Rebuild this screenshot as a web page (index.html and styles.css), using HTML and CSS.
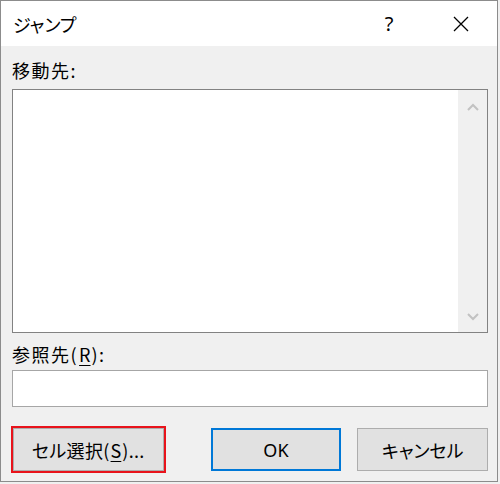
FILE: index.html
```html
<!DOCTYPE html>
<html lang="ja">
<head>
<meta charset="utf-8">
<title>ジャンプ</title>
<link rel="stylesheet" href="styles.css">
</head>
<body>
<div class="window">
  <div class="titlebar">
    <div class="title">ジャンプ</div>
    <div class="tb-btn help">?</div>
    <div class="tb-btn close">
      <svg width="16" height="16" viewBox="0 0 16 16"><path d="M1 1 L15 15 M15 1 L1 15" stroke="#000" stroke-width="1.3" fill="none"/></svg>
    </div>
  </div>
  <div class="content">
    <div class="label label-top">移動先:</div>
    <div class="listbox">
      <div class="list-area"></div>
      <div class="scrollbar">
        <svg class="arrow" width="12" height="8" viewBox="0 0 12 8"><path d="M1 7 L6 2 L11 7" stroke="#c2c2c2" stroke-width="2" fill="none"/></svg>
        <svg class="arrow" width="12" height="8" viewBox="0 0 12 8"><path d="M1 1 L6 6 L11 1" stroke="#c2c2c2" stroke-width="2" fill="none"/></svg>
      </div>
    </div>
    <div class="label label-ref">参照先(<span class="mn">R</span>):</div>
    <div class="textbox"></div>
    <div class="buttons">
      <div class="btn btn-select">セル選択(<span class="mn">S</span>)...</div>
      <div class="btn btn-ok">OK</div>
      <div class="btn btn-cancel">キャンセル</div>
    </div>
  </div>
</div>
</body>
</html>
```

FILE: styles.css
```css
html, body {
  margin: 0;
  padding: 0;
  background: #f0f0f0;
}
body {
  width: 500px;
  height: 484px;
  overflow: hidden;
  font-family: "Noto Sans CJK JP", "Noto Sans", sans-serif;
  font-feature-settings: "palt";
  color: #000;
}
.window {
  box-sizing: border-box;
  width: 498px;
  height: 482px;
  border: 1px solid #8c8c8c;
  background: #f0f0f0;
  display: flex;
  flex-direction: column;
}
.titlebar {
  height: 45px;
  background: #fff;
  display: flex;
  align-items: center;
  padding-right: 13px;
}
.title {
  flex: 1;
  padding-left: 12px;
  font-size: 18px;
  line-height: 24px;
  letter-spacing: 0;
}
.tb-btn {
  width: 46px;
  height: 45px;
  display: flex;
  align-items: center;
  justify-content: center;
}
.help {
  font-family: "Noto Sans", sans-serif;
  font-size: 20px;
  margin-right: 26px;
}
.close svg {
  display: block;
}
.content {
  flex: 1;
  padding: 0 9px 0 11px;
  display: flex;
  flex-direction: column;
}
.label {
  font-size: 18px;
  line-height: 24px;
  height: 24px;
  letter-spacing: 1.5px;
}
.label-top {
  margin-top: 12px;
  margin-bottom: 7px;
}
.label-ref {
  margin-top: 9px;
  margin-bottom: 4px;
}
.mn {
  text-decoration: underline;
  text-underline-offset: 3px;
  text-decoration-thickness: 1px;
  letter-spacing: 0;
  margin: 0 1px;
}
.listbox {
  box-sizing: border-box;
  height: 244px;
  width: 476px;
  border: 1px solid #828282;
  background: #fff;
  display: flex;
}
.list-area {
  flex: 1;
}
.scrollbar {
  width: 29px;
  background: #f0f0f0;
  display: flex;
  flex-direction: column;
  justify-content: space-between;
  align-items: center;
  padding: 13px 0 11px;
}
.arrow {
  display: block;
  margin-left: 1px;
}
.textbox {
  box-sizing: border-box;
  height: 37px;
  width: 476px;
  border: 1px solid #a6a6a6;
  background: #fff;
}
.buttons {
  margin-top: 21px;
  display: flex;
  align-items: flex-start;
}
.btn {
  box-sizing: border-box;
  height: 43px;
  background: #e1e1e1;
  border: 1px solid #adadad;
  display: flex;
  align-items: center;
  justify-content: center;
  font-size: 18px;
  letter-spacing: 0;
}
.btn-select {
  width: 151px;
  margin-left: 1px;
  outline: 2px solid #e8131b;
  letter-spacing: 0.3px;
}
.btn-ok {
  width: 131px;
  margin-left: 47px;
  border: 2px solid #0078d7;
  font-family: "Noto Sans", sans-serif;
}
.btn-cancel {
  width: 131px;
  margin-left: 16px;
}
```
